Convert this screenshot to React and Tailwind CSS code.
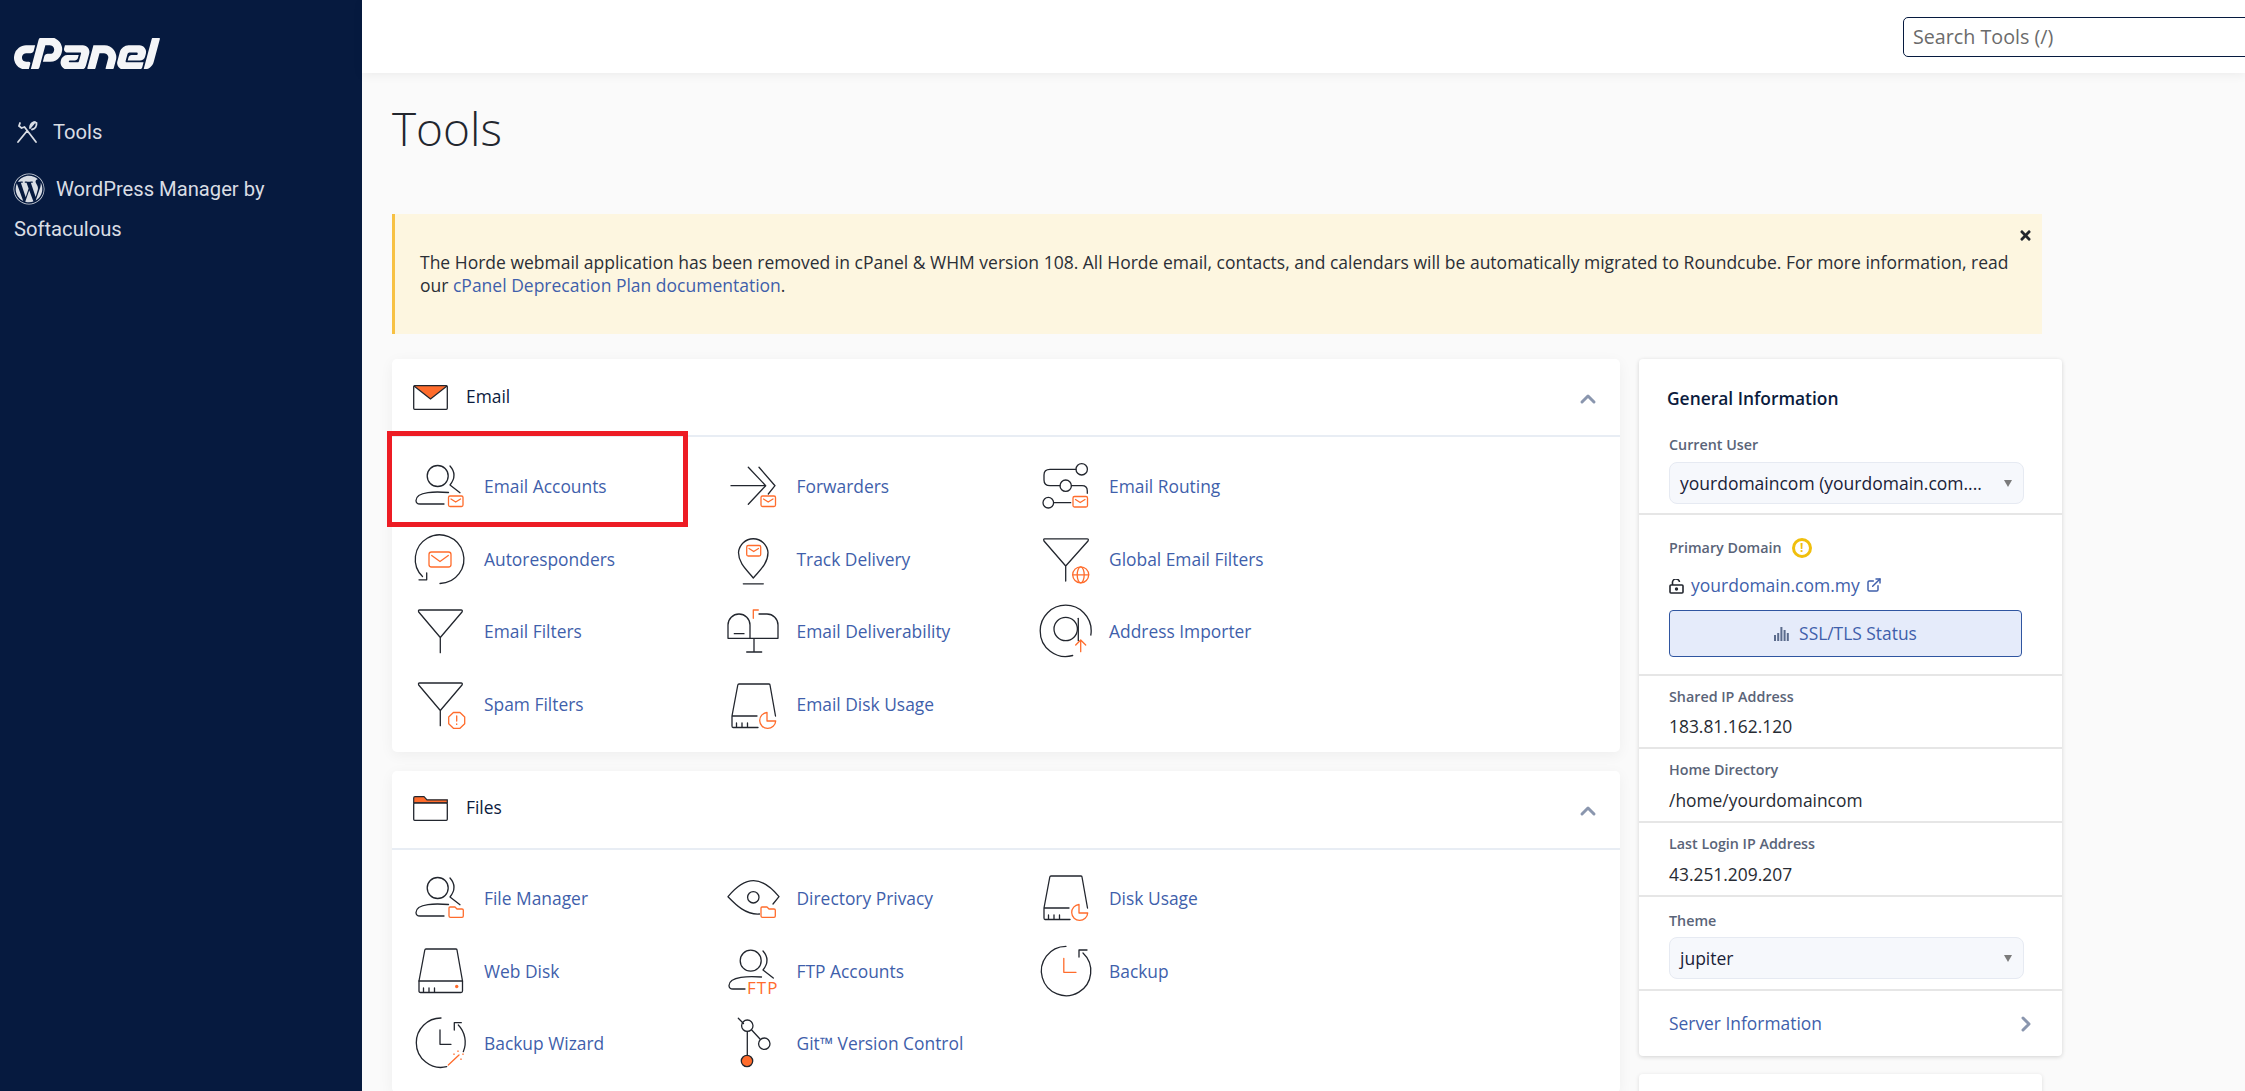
import { ChevronUp, ChevronRight, ExternalLink } from 'lucide-react';
import { SiCpanel } from 'react-icons/si';
import { FaWordpress, FaTimes } from 'react-icons/fa';

const DARK = '#22262e';
const ORANGE = '#ff6c2c';

const Svg = ({ children }) => (
  <svg viewBox="0 0 50 50" fill="none" stroke={DARK} strokeWidth="1.3" strokeLinecap="round" strokeLinejoin="round" className="w-[50px] h-[50px] overflow-visible shrink-0">
    {children}
  </svg>
);

const MailBadge = ({ x = 33.5, y = 35 }) => (
  <g stroke={ORANGE} fill="#fff">
    <rect x={x} y={y} width="14.5" height="10.5" rx="1.5" />
    <path d={`M${x + 2.5} ${y + 3} L${x + 7.2} ${y + 6} L${x + 12} ${y + 3}`} fill="none" />
  </g>
);

const FolderBadge = ({ x = 34 }) => (
  <path d={`M${x} 43 V35 Q${x} 34 ${x + 1} 34 H${x + 6} L${x + 8} 36 H${x + 13} Q${x + 14.3} 36 ${x + 14.3} 37 V43 Q${x + 14.3} 44.3 ${x + 13} 44.3 H${x + 1.5} Q${x} 44.3 ${x} 43Z`} stroke={ORANGE} fill="#fff" />
);

const Person = () => (
  <>
    <circle cx="22.7" cy="15" r="10.5" />
    <path d="M35 5 Q43 14 35 24 L45 31.7" />
    <path d="M33.5 31.5 C22 30.5 1 30 1 39.5 Q1 43 5 43 H29" />
  </>
);

const Funnel = () => (
  <path d="M4.5 4 H46 Q48 4 47 6 L25.3 31.5 L3.7 6 Q3 4 4.5 4 Z M25.3 31.5 V46.7" />
);

const Disk = ({ web }) => (
  <>
    <path d="M11 3 H41 Q42 3 42 4 L47.5 35 V45 Q47.5 46.5 46 46.5 H5.5 Q4 46.5 4 45 V35 L9.8 4 Q10 3 11 3 Z" className={web ? '' : 'hidden'} />
    <path d="M4 35 H47.5" className={web ? '' : 'hidden'} />
    <path d="M42 4 L47.5 35 M30 46.5 H5 Q4 46.5 4 45 V35 L9.8 4 Q10 3 11 3 H41 Q42 3 42 4 M4 35 H29" className={web ? 'hidden' : ''} />
    <path d="M8.5 42 V46 M14 42 V46 M19.5 42 V46" />
    {web ? (
      <circle cx="41.7" cy="40.5" r="1.7" fill={ORANGE} stroke="none" />
    ) : (
      <path d="M39 31.5 A8 8 0 1 0 47.7 40 H39 Z" stroke={ORANGE} fill="#fff" />
    )}
  </>
);

const icons = {
  emailAccounts: (
    <Svg>
      <Person />
      <MailBadge />
    </Svg>
  ),
  forwarders: (
    <Svg>
      <path d="M3 24.7 H37 M20.3 6.3 L37.7 24.7 L20.3 43.3 M31 6.3 L47 24.7 L40.3 33" />
      <MailBadge x={33} />
    </Svg>
  ),
  routing: (
    <Svg>
      <circle cx="41.7" cy="8.3" r="5.7" />
      <path d="M36 8.3 H10 Q4 8.3 4 14 V19 Q4 24.7 10 24.7 H20" />
      <circle cx="25.7" cy="24.7" r="5.7" />
      <path d="M31.4 24.7 H42 Q47.3 24.7 47.3 30 V32.3" />
      <circle cx="8.3" cy="41.7" r="5.3" />
      <path d="M13.6 41.7 H30.7" />
      <MailBadge x={33} y={35.5} />
    </Svg>
  ),
  autoresponders: (
    <Svg>
      <path d="M25 49.5 A24.3 24.3 0 1 0 7.5 42.5" />
      <path d="M11.7 38.8 V45.8 H4" />
      <g stroke={ORANGE}>
        <rect x="14" y="18" width="22" height="15" rx="2.5" />
        <path d="M16.7 21.5 L25 27.5 L33.3 21.5" />
      </g>
    </Svg>
  ),
  track: (
    <Svg>
      <path d="M25.3 44 C20 37 10.5 30 10.5 18.5 A14.8 15 0 0 1 40 18.5 C40 30 31 37 25.3 44 Z" />
      <path d="M15.3 49.8 H35.3" />
      <g stroke={ORANGE}>
        <rect x="18.7" y="11.5" width="14" height="10.5" rx="1.5" />
        <path d="M21 14.5 L25.7 17.5 L30.5 14.5" />
      </g>
    </Svg>
  ),
  globalFilters: (
    <Svg>
      <path d="M4.5 4.8 H47 Q49 4.8 48 7 L25.7 32 L4 7 Q3.2 4.8 4.5 4.8 Z M25.7 32 V47" />
      <g stroke={ORANGE}>
        <circle cx="40.7" cy="40.8" r="8" />
        <ellipse cx="40.7" cy="40.8" rx="3.5" ry="8" />
        <path d="M32.7 40.8 H48.7" />
      </g>
    </Svg>
  ),
  filters: (
    <Svg>
      <Funnel />
    </Svg>
  ),
  deliverability: (
    <Svg>
      <path d="M0 32.3 V19 A11 11 0 0 1 22 19 V32.3 M0 32.3 H50 V19 A11 11 0 0 0 39 8 H31 M6.3 27.7 H16 M26 32.3 V46 M18.7 46 H33.7" />
      <path d="M25.3 12.3 V4 H30.3" stroke={ORANGE} />
    </Svg>
  ),
  importer: (
    <Svg>
      <path d="M32.7 49.5 A25.5 25.5 0 0 1 0.2 24.7 A25.5 25.5 0 0 1 51.2 24.7 Q51.2 27 50.8 29" />
      <circle cx="25.7" cy="23" r="11.7" />
      <path d="M38.3 12.3 V34.7" />
      <path d="M40.7 45.7 V34.7 M35.7 39 L40.7 34 L45.7 39" stroke={ORANGE} />
    </Svg>
  ),
  spam: (
    <Svg>
      <Funnel />
      <path d="M38.4 33.5 H45 L49.7 38 V44.7 L45 49.3 H38.4 L33.7 44.7 V38 Z" stroke={ORANGE} fill="#fff" />
      <path d="M41.7 37 V42 M41.7 45 V45.4" stroke={ORANGE} />
    </Svg>
  ),
  emailDisk: (
    <Svg>
      <g transform="translate(0 2)">
        <Disk />
      </g>
    </Svg>
  ),
  fileManager: (
    <Svg>
      <Person />
      <FolderBadge />
    </Svg>
  ),
  privacy: (
    <Svg>
      <path d="M31.5 41 C18 42 8 32 0 23.7 C8 14 16 7.7 25.5 7.7 C35 7.7 43 14 51 23.7 L45 31" />
      <circle cx="25.3" cy="24.3" r="5.7" />
      <FolderBadge x={33} />
    </Svg>
  ),
  disk: (
    <Svg>
      <Disk />
    </Svg>
  ),
  webDisk: (
    <Svg>
      <Disk web />
    </Svg>
  ),
  ftp: (
    <Svg>
      <circle cx="22.7" cy="14.7" r="10.5" />
      <path d="M35 5 Q43 14 35 24 L45.3 32" />
      <path d="M33.5 31 C22 30 1 30 1 39.5 Q1 43 5 43 H17" />
      <text x="19" y="48" fill={ORANGE} stroke="none" fontSize="17" letterSpacing="1" className="font-['Open_Sans',sans-serif]">FTP</text>
    </Svg>
  ),
  backup: (
    <Svg>
      <path d="M26 0.3 A24.7 24.7 0 1 0 43 7" />
      <path d="M39 11 V4 H47" />
      <path d="M23.8 12.3 V26.3 H36" stroke={ORANGE} />
    </Svg>
  ),
  wizard: (
    <Svg>
      <path d="M26 0 A24.7 24.7 0 0 0 1.3 24.7 A24.7 24.7 0 0 0 31.7 48.73 M43.3 7 A24.7 24.7 0 0 1 48.3 33.7" />
      <path d="M39.3 12 V4.7 H46.3" />
      <path d="M25 12 V26.3 H36" />
      <path d="M33.3 47 L44 37" stroke={ORANGE} />
      <path d="M43 33 V33.4 M48 36 V36.4 M46 41 V41.4 M39 36 V36.4" stroke={ORANGE} strokeDasharray="1 2" />
    </Svg>
  ),
  git: (
    <Svg>
      <path d="M10.3 0.3 L15.5 5.5" />
      <circle cx="19.3" cy="7.7" r="5.7" />
      <path d="M19.3 13.4 V37.5 M23.7 12 L32 21" />
      <circle cx="36.3" cy="25.7" r="5.7" />
      <circle cx="19" cy="43" r="5.7" fill={ORANGE} />
    </Svg>
  ),
};

const emailItems = [
  ['Email Accounts', 'emailAccounts'],
  ['Forwarders', 'forwarders'],
  ['Email Routing', 'routing'],
  ['Autoresponders', 'autoresponders'],
  ['Track Delivery', 'track'],
  ['Global Email Filters', 'globalFilters'],
  ['Email Filters', 'filters'],
  ['Email Deliverability', 'deliverability'],
  ['Address Importer', 'importer'],
  ['Spam Filters', 'spam'],
  ['Email Disk Usage', 'emailDisk'],
];

const fileItems = [
  ['File Manager', 'fileManager'],
  ['Directory Privacy', 'privacy'],
  ['Disk Usage', 'disk'],
  ['Web Disk', 'webDisk'],
  ['FTP Accounts', 'ftp'],
  ['Backup', 'backup'],
  ['Backup Wizard', 'wizard'],
  ['Git™ Version Control', 'git'],
];

const ToolGrid = ({ items, padding }) => (
  <div className={`grid grid-cols-[repeat(3,312.5px)] auto-rows-[72.5px] pl-[23px] ${padding}`}>
    {items.map(([label, icon]) => (
      <a key={label} className="flex items-center gap-[19px] text-[17.4px] text-[#3f5fab]">
        {icons[icon]}
        <span>{label}</span>
      </a>
    ))}
  </div>
);

const Card = ({ title, icon, height, children }) => (
  <section className="bg-white rounded-[5px] shadow-[0_3px_14px_rgba(0,0,0,0.05)]">
    <div className={`flex items-center pl-[21px] pr-[20px] border-b-2 border-[#e8edf4] ${height}`}>
      {icon}
      <h2 className="ml-[18px] -mt-[2px] text-[17.4px] text-[#0b1b3d]">{title}</h2>
      <ChevronUp className="ml-auto mt-1 w-[24px] h-[24px] text-[#8a96ae]" strokeWidth={3} />
    </div>
    {children}
  </section>
);

const Label = ({ children }) => (
  <div className="text-[14.3px] leading-5 font-semibold text-[#5a6478]">{children}</div>
);

const Stat = ({ label, value, mt }) => (
  <div className="px-[30px] pt-[11px] pb-[9px] border-b-2 border-[#e6e6e6]">
    <Label>{label}</Label>
    <div className={`${mt} text-[17.4px] leading-6 text-[#272b33]`}>{value}</div>
  </div>
);

const Select = ({ value }) => (
  <div className="flex items-center justify-between h-[42px] w-[355px] pl-[10px] pr-[11px] rounded-[8px] border border-[#e6eaf2] bg-[#f6f8fc] text-[17.5px] text-[#1a2238]">
    <span>{value}</span>
    <span className="w-0 h-0 border-x-[4px] border-x-transparent border-t-[7px] border-t-[#7b7b7b]" />
  </div>
);

const App = () => (
  <div className="flex h-screen overflow-hidden bg-[#fafafa] font-['Open_Sans',sans-serif]">
    {/* Sidebar */}
    <aside className="w-[362px] shrink-0 bg-[#061a3f] font-['Roboto',sans-serif] text-[20.2px] text-[#d9dde4]">
      <div className="h-[121px] pl-[14px] pt-[38px]">
        <SiCpanel viewBox="0 9.45 24 5.1" className="w-[147px] h-[31px] text-[#f4f5f7]" preserveAspectRatio="xMinYMid meet" />
      </div>
      <a className="flex items-center gap-[14px] pl-[15px] h-[22px]">
        <svg viewBox="0 0 24 24" fill="none" stroke="currentColor" strokeWidth="1.8" strokeLinecap="round" className="w-[24px] h-[24px]">
          <path d="M5 3 L4 6 L6.5 8 L9.5 7 L21 22 M3 22 L12 11 M15 8 L20 2 M17 9.5 C20 9 22 6 21.5 3 L19 2 C16.5 3 15 5.5 15 8" />
        </svg>
        <span>Tools</span>
      </a>
      <a className="block mt-[26px] pl-[14px] leading-[40px] -indent-[1px]">
        <FaWordpress className="inline-block w-[32px] h-[32px] mr-[11px] -mt-1 align-middle" />
        WordPress Manager by Softaculous
      </a>
    </aside>

    <div className="flex-1 min-w-0 flex flex-col">
      {/* Top bar */}
      <header className="h-[73px] shrink-0 bg-white shadow-[0_2px_10px_rgba(0,0,0,0.06)] flex items-center pl-[1541px]">
        <div className="w-[420px] shrink-0 h-10 flex items-center pl-[9px] border-[1.5px] border-[#061a3f] rounded-[5px] text-[19.7px] text-[#6b6b6b]">
          Search Tools (/)
        </div>
      </header>

      <main className="pl-[30px] pt-[32px]">
        <h1 className="text-[46px] leading-[46px] font-light text-[#22262e]">Tools</h1>

        {/* Notice */}
        <div className="relative mt-[63px] w-[1650px] h-[120px] flex items-center bg-[#fdf6e0] border-l-[3px] border-[#f7c143] pl-[25px] pr-[18px] text-[17.5px] leading-[23px] text-[#2b2f36]">
          <p>
            The Horde webmail application has been removed in cPanel &amp; WHM version 108. All Horde email, contacts, and calendars will be automatically migrated to Roundcube. For more information, read our{' '}
            <a className="text-[#3f5fab]">cPanel Deprecation Plan documentation</a>.
          </p>
          <FaTimes className="absolute right-[9px] top-[14px] w-[15px] h-[15px] text-[#22262e]" />
        </div>

        <div className="flex gap-[19px] mt-[25px] items-start">
          {/* Tool groups */}
          <div className="relative w-[1228px] flex flex-col gap-[19px]">
            <Card
              title="Email"
              height="h-[78px]"
              icon={
                <svg viewBox="0 0 35 25" className="w-[35px] h-[25px]">
                  <path d="M1 1 H34 L17.5 14 Z" fill={ORANGE} />
                  <rect x="0.7" y="0.7" width="33.6" height="23.6" rx="1" fill="none" stroke={DARK} strokeWidth="1.3" />
                  <path d="M1 1 L17.5 14 L34 1" fill="none" stroke={DARK} strokeWidth="1.3" />
                </svg>
              }
            >
              <ToolGrid items={emailItems} padding="pt-[13px] pb-[12px]" />
            </Card>
            <Card
              title="Files"
              height="h-[79px] pb-[2px]"
              icon={
                <svg viewBox="0 0 35 25" className="w-[35px] h-[25px]">
                  <path d="M0.7 7 V2 Q0.7 0.7 2 0.7 H11 L14 3.8 H34.3 V7 Z" fill={ORANGE} stroke={DARK} strokeWidth="1.2" />
                  <rect x="0.7" y="7" width="33.6" height="17.3" rx="1" fill="#fff" stroke={DARK} strokeWidth="1.3" />
                </svg>
              }
            >
              <ToolGrid items={fileItems} padding="pt-[12px] pb-[13px]" />
            </Card>
            {/* Red highlight around Email Accounts */}
            <div className="absolute left-[-5px] top-[72px] w-[301px] h-[96px] border-[5px] border-[#ed1c24]" />
          </div>

          {/* General information */}
          <div className="w-[423px] shrink-0">
            <div className="bg-white rounded-[4px] shadow-[0_1px_4px_rgba(0,0,0,0.16)]">
              <div className="px-[30px] pt-[27px] pb-[9px] border-b-2 border-[#e6e6e6]">
                <h3 className="-ml-[2px] text-[17.4px] leading-6 font-semibold text-[#0b1b3d]">General Information</h3>
                <div className="mt-[25px]">
                  <Label>Current User</Label>
                </div>
                <div className="mt-[7px]">
                  <Select value="yourdomaincom (yourdomain.com...." />
                </div>
              </div>
              <div className="px-[30px] pt-[23px] pb-[17px] border-b-2 border-[#e6e6e6]">
                <div className="flex items-center gap-[10px]">
                  <Label>Primary Domain</Label>
                  <span className="w-5 h-5 rounded-full border-[3px] border-[#f0bf0d] flex items-center justify-center text-[12px] leading-none font-bold text-[#f0bf0d]">!</span>
                </div>
                <div className="mt-[15px] h-6 flex items-center text-[17.5px] text-[#3f5fab]">
                  <svg viewBox="0 0 15 15" fill="none" stroke="#22262e" strokeWidth="1.6" className="w-[15px] h-[15px] mt-[3px] mr-[7px]">
                    <rect x="1" y="6" width="13" height="8" rx="1" />
                    <path d="M3.5 6 V4 A3.5 3.5 0 0 1 10.5 3" />
                    <circle cx="7.5" cy="10" r="0.9" fill="#22262e" />
                  </svg>
                  yourdomain.com.my
                  <ExternalLink className="ml-[6px] w-[16px] h-[16px]" strokeWidth={2.2} />
                </div>
                <button className="mt-[13px] w-[353px] h-[47px] flex items-center justify-center gap-[10px] rounded-[4px] border-[1.5px] border-[#2f55a0] bg-[#e5ebfa] text-[17.4px] text-[#3f5fab]">
                  <svg viewBox="0 0 15 15" fill="#5b6b8c" className="w-[15px] h-[15px]">
                    <path d="M0 9 H2 V15 H0 Z M3.2 7 H5.2 V15 H3.2 Z M6.4 1 H8.4 V15 H6.4 Z M9.6 4 H11.6 V15 H9.6 Z M12.8 7 H14.8 V15 H12.8 Z" />
                  </svg>
                  SSL/TLS Status
                </button>
              </div>
              <Stat label="Shared IP Address" value="183.81.162.120" mt="mt-[7px]" />
              <Stat label="Home Directory" value="/home/yourdomaincom" mt="mt-[8px]" />
              <Stat label="Last Login IP Address" value="43.251.209.207" mt="mt-[8px]" />
              <div className="px-[30px] pt-[14px] pb-[10px] border-b-2 border-[#e6e6e6]">
                <Label>Theme</Label>
                <div className="mt-[6px]">
                  <Select value="jupiter" />
                </div>
              </div>
              <a className="flex items-center justify-between h-[65px] pl-[30px] pr-[24px] text-[17.4px] text-[#3f5fab]">
                Server Information
                <ChevronRight className="w-6 h-6 text-[#8a96ae]" strokeWidth={3} />
              </a>
            </div>
            <div className="mt-[18px] w-[403px] h-[200px] bg-white rounded-[4px] shadow-[0_1px_4px_rgba(0,0,0,0.12)]" />
          </div>
        </div>
      </main>
    </div>
  </div>
);

export default App;
